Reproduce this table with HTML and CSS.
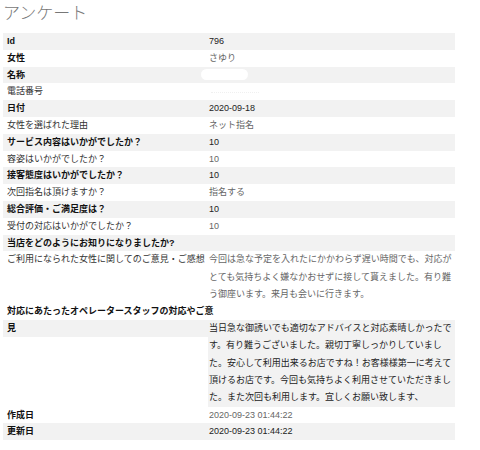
FILE: index.html
```html
<!DOCTYPE html>
<html lang="ja">
<head>
<meta charset="utf-8">
<title>アンケート</title>
<link rel="stylesheet" href="styles.css">
</head>
<body>
<div class="page">
  <h1 class="title">アンケート</h1>
  <div class="table">
    <div class="row b"><div class="k">Id</div><div class="v">796</div></div>
    <div class="row b"><div class="k">女性</div><div class="v">さゆり</div></div>
    <div class="row b"><div class="k">名称</div><div class="v"><span class="mask"></span></div></div>
    <div class="row"><div class="k">電話番号</div><div class="v"><span class="dots"></span></div></div>
    <div class="row b"><div class="k">日付</div><div class="v">2020-09-18</div></div>
    <div class="row"><div class="k">女性を選ばれた理由</div><div class="v">ネット指名</div></div>
    <div class="row b"><div class="k">サービス内容はいかがでしたか？</div><div class="v">10</div></div>
    <div class="row"><div class="k">容姿はいかがでしたか？</div><div class="v">10</div></div>
    <div class="row b"><div class="k">接客態度はいかがでしたか？</div><div class="v">10</div></div>
    <div class="row"><div class="k">次回指名は頂けますか？</div><div class="v">指名する</div></div>
    <div class="row b"><div class="k">総合評価・ご満足度は？</div><div class="v">10</div></div>
    <div class="row"><div class="k">受付の対応はいかがでしたか？</div><div class="v">10</div></div>
    <div class="row b"><div class="k">当店をどのようにお知りになりましたか?</div><div class="v"></div></div>
    <div class="row multi"><div class="k">ご利用になられた女性に関してのご意見・ご感想</div><div class="v">今回は急な予定を入れたにかかわらず遅い時間でも、対応がとても気持ちよく嫌なかおせずに接して貰えました。有り難う御座います。来月も会いに行きます。</div></div>
    <div class="row b split">
      <div class="over">対応にあたったオペレータースタッフの対応やご意</div>
      <div class="k">見</div>
      <div class="v">当日急な御誘いでも適切なアドバイスと対応素晴しかったです。有り難うございました。親切丁寧しっかりしていました。安心して利用出来るお店ですね！お客様様第一に考えて頂けるお店です。今回も気持ちよく利用させていただきました。また次回も利用します。宜しくお願い致します、</div>
    </div>
    <div class="row b"><div class="k">作成日</div><div class="v">2020-09-23 01:44:22</div></div>
    <div class="row b"><div class="k">更新日</div><div class="v">2020-09-23 01:44:22</div></div>
  </div>
</div>
</body>
</html>
```

FILE: styles.css
```css
html, body {
  margin: 0;
  padding: 0;
  background: #fff;
}

.page {
  padding: 0 25px 0 3px;
  font-family: "Liberation Sans", "Noto Sans CJK JP", sans-serif;
  font-size: 9px;
  color: #444;
}

.title {
  margin: 0;
  height: 33px;
  font-family: "Noto Sans CJK JP", sans-serif;
  font-weight: 300;
  font-size: 17px;
  line-height: 24px;
  color: #777;
}

.table {
  width: 452px;
}

.row {
  display: grid;
  grid-template-columns: 205px 1fr;
  line-height: 16.8px;
}

.row:nth-child(odd) {
  background: #f2f2f2;
}

.k {
  padding-left: 4px;
  color: #333;
  white-space: nowrap;
}

.b .k {
  font-weight: bold;
  color: #111;
}

.v {
  padding-left: 1px;
  color: #666;
}

.row:nth-child(odd) .v {
  color: #222;
}

.multi .v,
.split .v {
  line-height: 17.3px;
}

.split {
  align-items: start;
}

.row.split {
  background: transparent;
}

.split .over {
  grid-column: 1 / -1;
  padding-left: 4px;
  font-weight: bold;
  color: #111;
  white-space: nowrap;
  background: #fff;
}

.split .k,
.split .v {
  background: #f2f2f2;
}

.mask {
  display: inline-block;
  width: 47px;
  height: 11px;
  margin-left: -8px;
  vertical-align: -2px;
  border-radius: 6px;
  background: #fff;
}

.dots {
  display: inline-block;
  width: 48px;
  height: 1px;
  margin-left: 2px;
  vertical-align: 1px;
  border-bottom: 1px dotted #f0f0f0;
}
```
